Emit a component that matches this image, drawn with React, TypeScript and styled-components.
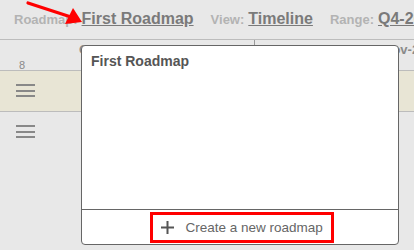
import styled, { createGlobalStyle } from "styled-components";

const GlobalStyle = createGlobalStyle`
  html, body {
    margin: 0;
    padding: 0;
    background: #e8e8e8;
    font-family: "Liberation Sans", Arial, sans-serif;
  }
`;

const Page = styled.div`
  position: relative;
  width: 414px;
  height: 250px;
  overflow: hidden;
  background: #e8e8e8;
`;

const TopBar = styled.header`
  display: flex;
  align-items: baseline;
  gap: 17px;
  height: 40px;
  padding: 10px 0 0 14px;
  box-sizing: border-box;
  border-bottom: 1px solid #bcbcbc;
  white-space: nowrap;
`;

const Field = styled.div`
  display: flex;
  align-items: baseline;
  gap: 4px;
`;

const Label = styled.span`
  font-size: 13px;
  font-weight: bold;
  color: #b3b3b3;
`;

const Value = styled.span`
  font-size: 16px;
  font-weight: bold;
  color: #7a7a7a;
  text-decoration: underline;
`;

const MonthRow = styled.div`
  display: flex;
  height: 30px;
  border-bottom: 1px solid #bcbcbc;
`;

const MonthCell = styled.div<{ $width: number; $pad: number; $divider?: boolean }>`
  width: ${(p) => p.$width}px;
  flex-shrink: 0;
  padding: 2px 0 0 ${(p) => p.$pad}px;
  box-sizing: border-box;
  font-size: 13px;
  font-weight: bold;
  color: #8a8a8a;
  white-space: nowrap;
  border-right: ${(p) => (p.$divider ? "1px solid #9a9a9a" : "none")};
  position: relative;
`;

const WeekNo = styled.span`
  position: absolute;
  left: 19px;
  bottom: -1px;
  font-size: 11px;
  color: #8a8a8a;
  font-weight: normal;
`;

const Lane = styled.div<{ $tint?: boolean }>`
  height: 41px;
  padding: 13px 0 0 16px;
  box-sizing: border-box;
  background: ${(p) => (p.$tint ? "#e8e5d5" : "#e8e8e8")};
  border-bottom: 1px solid ${(p) => (p.$tint ? "#bcbcbc" : "transparent")};
`;

const Burger = styled.div`
  display: flex;
  flex-direction: column;
  gap: 3.5px;
  width: 19px;
  span {
    height: 2px;
    background: #888;
  }
`;

const Popup = styled.div`
  position: absolute;
  left: 81px;
  top: 45px;
  width: 318px;
  height: 200px;
  box-sizing: border-box;
  background: #fff;
  border: 1px solid #666;
  border-radius: 4px;
  display: flex;
  flex-direction: column;
`;

const PopupList = styled.div`
  flex: 1;
  padding: 7px 9px;
`;

const PopupItem = styled.div`
  font-size: 14px;
  font-weight: bold;
  color: #555;
`;

const PopupFooter = styled.div`
  height: 35px;
  border-top: 1px solid #666;
  display: flex;
  justify-content: center;
  padding: 2px 0 0 3px;
  box-sizing: border-box;
`;

const CreateButton = styled.button`
  display: flex;
  align-items: center;
  gap: 11px;
  height: 31px;
  width: 184px;
  padding: 0 0 0 7px;
  box-sizing: border-box;
  border: 3px solid #f00;
  background: #fff;
  font-family: "Liberation Sans", Arial, sans-serif;
  font-size: 13.5px;
  color: #666;
  cursor: pointer;
`;

const Arrow = styled.svg`
  position: absolute;
  left: 0;
  top: 0;
`;

const Hamburger = () => (
  <Burger>
    <span />
    <span />
    <span />
  </Burger>
);

export default function App() {
  return (
    <Page>
      <GlobalStyle />
      <TopBar>
        <Field>
          <Label>Roadmap:</Label>
          <Value>First Roadmap</Value>
        </Field>
        <Field>
          <Label>View:</Label>
          <Value>Timeline</Value>
        </Field>
        <Field>
          <Label>Range:</Label>
          <Value>Q4-2020</Value>
        </Field>
      </TopBar>
      <MonthRow>
        <MonthCell $width={255} $pad={79} $divider>
          Oct-20
          <WeekNo>8</WeekNo>
        </MonthCell>
        <MonthCell $width={159} $pad={128}>
          Nov-20
        </MonthCell>
      </MonthRow>
      <Lane $tint>
        <Hamburger />
      </Lane>
      <Lane>
        <Hamburger />
      </Lane>

      <Popup>
        <PopupList>
          <PopupItem>First Roadmap</PopupItem>
        </PopupList>
        <PopupFooter>
          <CreateButton>
            <svg width="15" height="15" viewBox="0 0 15 15">
              <path d="M7.5 1v13M1 7.5h13" stroke="#555" strokeWidth="2" />
            </svg>
            Create a new roadmap
          </CreateButton>
        </PopupFooter>
      </Popup>

      <Arrow width="90" height="30" viewBox="0 0 90 30">
        <path d="M28 3 L71 17" stroke="#f00" strokeWidth="3.2" strokeLinecap="round" />
        <polygon points="82,22 73,8 65,24" fill="#f00" />
      </Arrow>
    </Page>
  );
}
